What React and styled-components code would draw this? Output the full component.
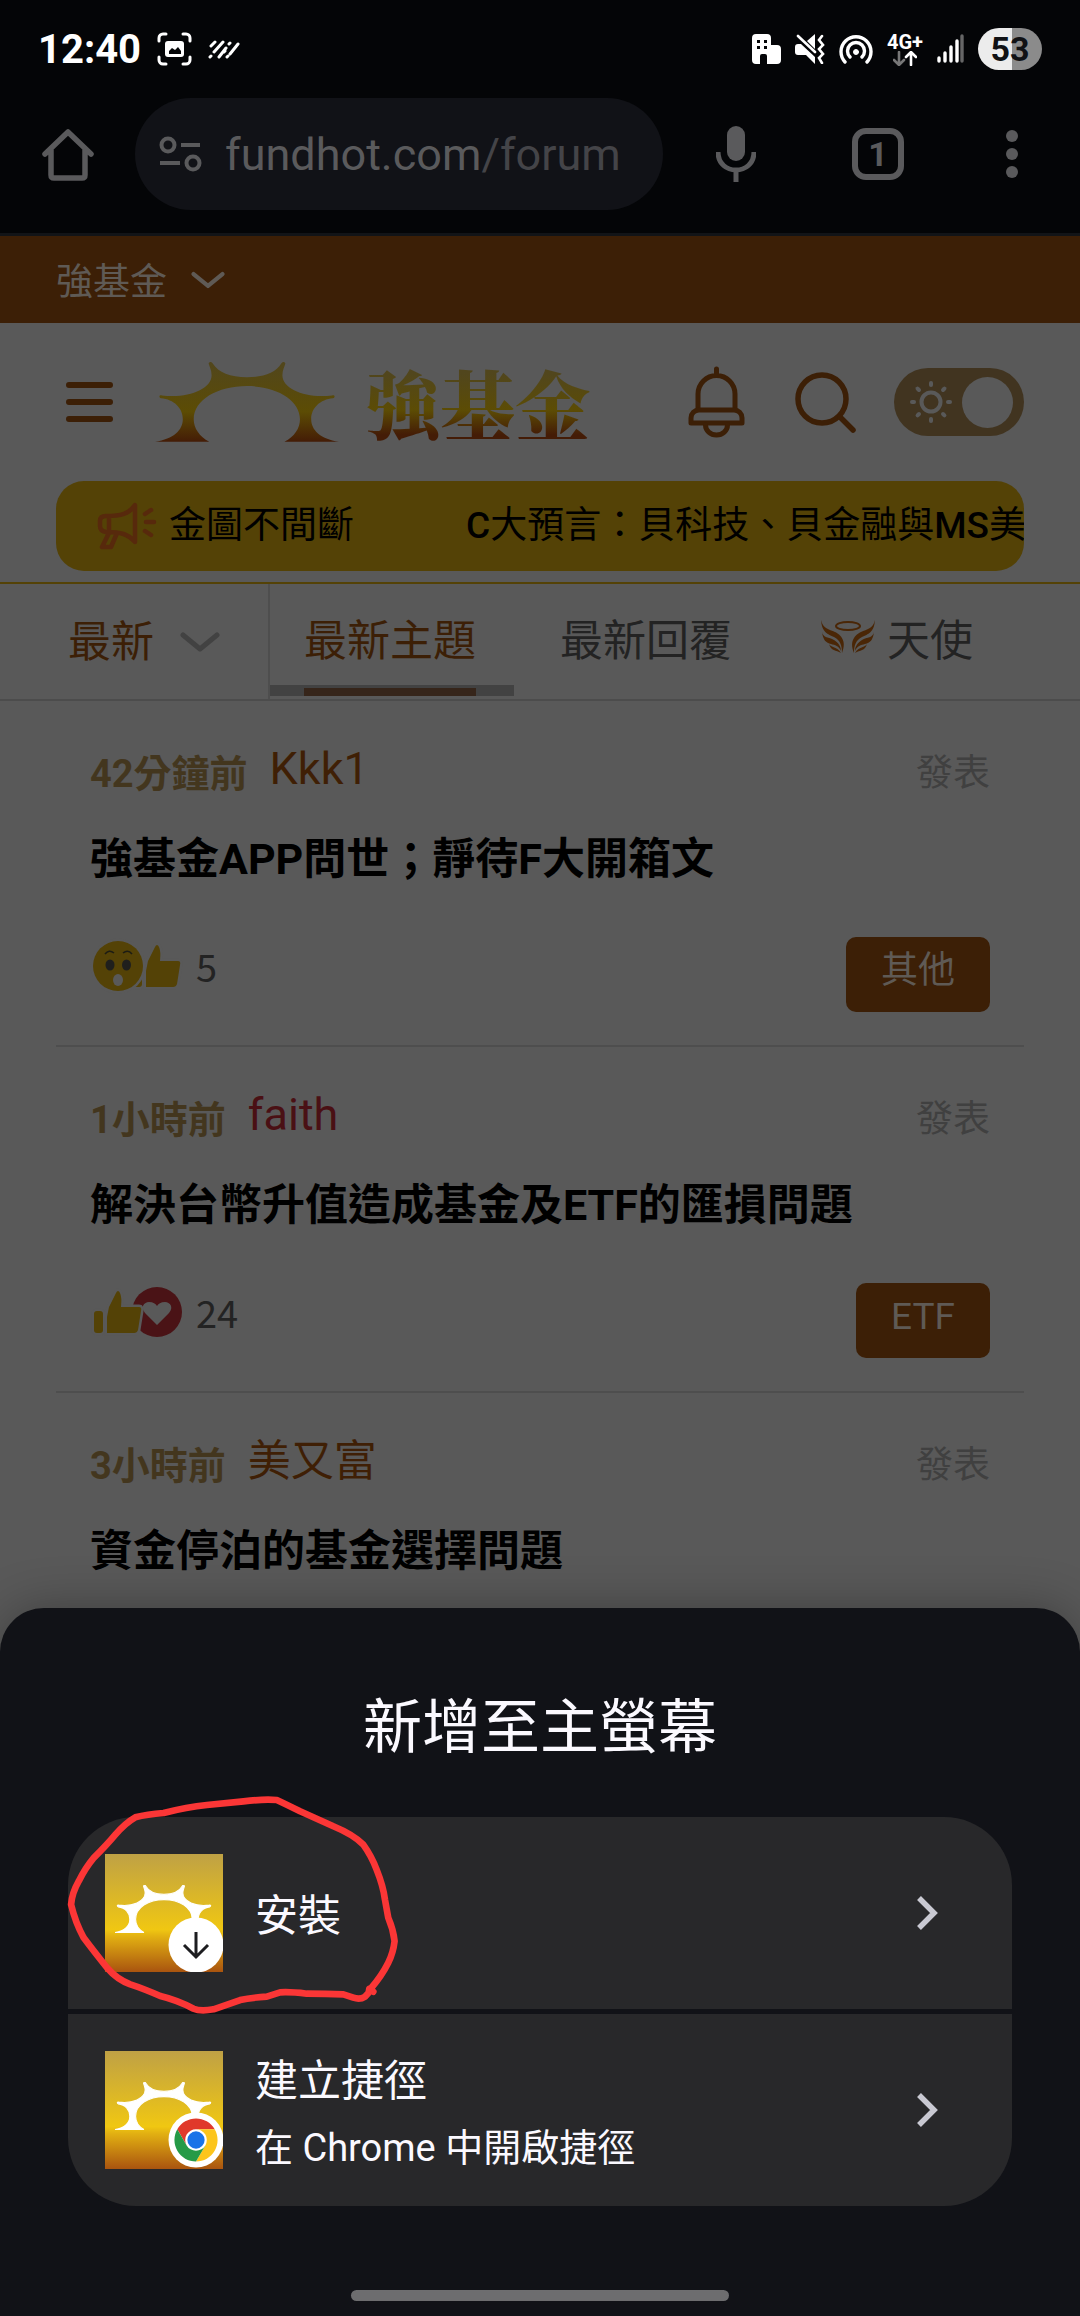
import React, { useState } from "react";
import styled, { createGlobalStyle } from "styled-components";

const posts = [
  {
    time: "42分鐘前",
    author: "Kkk1",
    latin: true,
    title: "強基金APP問世；靜待F大開箱文",
    reactions: ["wow", "like"],
    count: 5,
    tag: "其他"
  },
  {
    time: "1小時前",
    author: "faith",
    latin: true,
    red: true,
    title: "解決台幣升值造成基金及ETF的匯損問題",
    reactions: ["like", "love"],
    count: 24,
    tag: "ETF"
  },
  { time: "3小時前", author: "美又富", title: "資金停泊的基金選擇問題" }
];

const SUN_PATH =
  "M43 306C100 298 127 270 127 238C127 205 100 178 61 175C53 171 56 164 64 166C140 176 214 148 214 105C214 90 207 78 205 70C207 64 213 64 217 69C235 98 270 111 321 111C372 111 407 98 425 69C429 64 435 64 437 70C435 78 428 90 428 105C428 148 502 176 578 166C586 164 589 171 581 175C542 178 515 205 515 238C515 270 542 298 599 306H434C465 290 481 265 481 238C481 180 410 138 321 138C232 138 160 180 160 238C160 265 177 290 207 306Z";

const StatusIcons = () => (
  <>
    <svg width="29" height="30" viewBox="0 0 29 30" fill="#fff">
      <path
        fillRule="evenodd"
        d="M4 0H15a4 4 0 0 1 4 4V11H25a4 4 0 0 1 4 4V26a4 4 0 0 1-4 4H15V22a2 2 0 0 0-2-2H10a2 2 0 0 0-2 2V30H4a4 4 0 0 1-4-4V4a4 4 0 0 1 4-4ZM5 6V9H8V6ZM12 6V9H15V6ZM5 12V15H8V12ZM12 12V15H15V12Z"
      />
    </svg>
    <svg width="30" height="30" viewBox="0 0 30 30" fill="#fff">
      <path d="M3 10H6L20 23V30L11 21H3a3 3 0 0 1-3-3V13a3 3 0 0 1 3-3ZM12 7L20 0V15Z" />
      <path
        d="M3 2L20 18M27 2L24 6L28 11L24 15L28 20L24 24L27 29"
        fill="none"
        stroke="#fff"
        strokeWidth="2.6"
        strokeLinecap="round"
      />
    </svg>
    <svg width="34" height="30" viewBox="0 0 34 30" fill="none" stroke="#fff" strokeWidth="3.4" strokeLinecap="round">
      <path d="M6 28A15 15 0 1 1 28 28M11 23A8.500 8.500 0 1 1 23 23" />
      <circle cx="17" cy="18" r="2.500" fill="#fff" strokeWidth="1" />
    </svg>
    <Network>
      <span>4G+</span>
      <svg width="24" height="15" viewBox="0 0 24 15" fill="none" strokeWidth="2.6" strokeLinecap="round">
        <path d="M6 1V13M1 9L6 14L11 9" stroke="#777" />
        <path d="M18 14V2M13 6L18 1L23 6" stroke="#fff" />
      </svg>
    </Network>
    <svg width="27" height="30" viewBox="0 0 27 30" strokeWidth="3.4" strokeLinecap="round" stroke="#fff">
      <path d="M2 24V27M8 19V27M14 13V27M20 7V27" />
      <path d="M25 2V27" stroke="#666" />
    </svg>
  </>
);

const Chevron = ({ color, width, height }) => (
  <svg width={width} height={height} viewBox="0 0 40 20" fill="none">
    <path d="M3 3L20 17L37 3" stroke={color} strokeWidth="5" strokeLinecap="round" strokeLinejoin="round" />
  </svg>
);

const Reaction = ({ kind }) => {
  if (kind === "wow") {
    return (
      <svg width="50" height="50" viewBox="0 0 50 50">
        <circle cx="25" cy="25" r="25" fill="#544206" stroke="#595959" strokeWidth="5" paintOrder="stroke" />
        <path d="M12 13Q16 8 21 12M30 12Q35 8 39 13" fill="none" stroke="#1c1c14" strokeWidth="1.600" />
        <ellipse cx="17" cy="24" rx="4.500" ry="5.500" fill="#1f1f1d" />
        <ellipse cx="33.500" cy="24" rx="4.500" ry="5.500" fill="#1f1f1d" />
        <ellipse cx="25" cy="39" rx="5" ry="6" fill="#595959" />
      </svg>
    );
  }
  if (kind === "love") {
    return (
      <svg width="50" height="50" viewBox="0 0 50 50">
        <circle cx="25" cy="25" r="25" fill="#4a1316" />
        <path
          d="M25 38L13 26C8 20 12 15 17 15C21 15 24 17 25 19C26 17 29 15 33 15C38 15 42 20 37 26Z"
          fill="#595959"
        />
      </svg>
    );
  }
  return (
    <svg width="50" height="50" viewBox="0 0 50 50" fill="#544206" stroke="#595959" strokeWidth="5" paintOrder="stroke">
      <rect x="1" y="24" width="9" height="22" rx="3" />
      <path d="M14 46V30L16 20L23 6Q25 2 27 6Q29 10 28 20H46Q49 20 48 24L45 43Q44 46 41 46Z" />
    </svg>
  );
};

const AngelIcon = () => (
  <svg width="59" height="34" viewBox="-5 0 59 34" fill="#4a2606">
    <ellipse cx="27" cy="6" rx="12" ry="4" fill="none" stroke="#4a2606" strokeWidth="2" />
    <g id="wing">
      <path d="M0 0C2 9 8 9 14 12C20 15 26 21 21 33C21 25 19 20 13 17C7 14 1 13 0 0Z" />
      <path d="M1 12C2 18 8 17 13 20C18 23 20 27 20 31C18 26 14 25 10 24C5 23 2 20 1 12Z" />
      <path d="M8 24C10 28 16 26 20 33C15 30 10 31 8 24Z" />
    </g>
    <use href="#wing" transform="translate(54 0) scale(-1 1)" />
  </svg>
);

const AppIcon = ({ badge }) => (
  <svg width="118" height="118" viewBox="0 0 118 118">
    <defs>
      <linearGradient id="gold" x1="0" y1="0" x2="0" y2="1">
        <stop offset="0" stopColor="#bfa145" />
        <stop offset="0.640" stopColor="#f0c712" />
        <stop offset="0.700" stopColor="#e2b012" />
        <stop offset="1" stopColor="#a9540f" />
      </linearGradient>
    </defs>
    <rect width="118" height="118" fill="url(#gold)" />
    <svg x="10" y="31" width="98" height="48" viewBox="43 64 556 244" preserveAspectRatio="none">
      <path d={SUN_PATH} fill="#fff" stroke="#fff" strokeWidth="6" />
    </svg>
    {badge === "chrome" ? (
      <g transform="translate(91 89)">
        <circle r="27.500" fill="#fff" />
        <g transform="scale(1.080)">
          <path d="M0-10H17.300A20 20 0 0 0-17.300-10L-8.660 5A10 10 0 0 1 0-10Z" fill="#e0392b" />
          <path d="M0-10H17.300A20 20 0 0 0-17.300-10L-8.660 5A10 10 0 0 1 0-10Z" fill="#fcc51c" transform="rotate(120)" />
          <path d="M0-10H17.300A20 20 0 0 0-17.300-10L-8.660 5A10 10 0 0 1 0-10Z" fill="#259a47" transform="rotate(240)" />
          <circle r="8" fill="#1a73e8" />
        </g>
      </g>
    ) : (
      <g transform="translate(91 91)">
        <circle r="27.500" fill="#fff" />
        <path d="M0-13V11M-12 0L0 12L12 0" fill="none" stroke="#1d1d20" strokeWidth="3" />
      </g>
    )}
  </svg>
);

const Arrow = () => (
  <svg width="22" height="34" viewBox="0 0 22 34" fill="none">
    <path d="M2 2L17 17L2 32" stroke="#c9c9d2" strokeWidth="5.500" />
  </svg>
);

const Post = ({ post }) => (
  <PostItem>
    <Meta>
      <Time>{post.time}</Time>
      <Author href="#" $red={post.red} $latin={post.latin}>
        {post.author}
      </Author>
      <Action>發表</Action>
    </Meta>
    <PostTitle>{post.title}</PostTitle>
    {post.tag && (
      <PostFooter>
        <Reactions>
          {post.reactions.map(kind => (
            <Reaction key={kind} kind={kind} />
          ))}
          <Count>{post.count}</Count>
        </Reactions>
        <Tag href="#">{post.tag}</Tag>
      </PostFooter>
    )}
  </PostItem>
);

export default function App() {
  const [light, setLight] = useState(true);
  return (
    <Screen>
      <GlobalStyle />
      <StatusBar>
        <Clock>12:40</Clock>
        <svg width="35" height="34" viewBox="0 0 35 34" fill="none" stroke="#fff" strokeWidth="3" strokeLinecap="round">
          <path d="M2 9V6a4 4 0 0 1 4-4H9M26 2H29a4 4 0 0 1 4 4V9M33 25V28a4 4 0 0 1-4 4H26M9 32H6a4 4 0 0 1-4-4V25" />
          <rect x="8" y="9" width="19" height="16" rx="3" fill="#fff" stroke="none" />
          <path d="M12 22V19L15 16L18 18L21 15L24 19V22Z" fill="#040507" stroke="none" />
        </svg>
        <svg width="32" height="19" viewBox="0 0 32 19" stroke="#fff" strokeWidth="3" strokeLinecap="round">
          <path d="M3 6L7 2M2 17L3 16M6 12L15 2M11 17L18 8M21 4L22 3M19 17L20 16M16 12L17 11M22 14L30 4" />
        </svg>
        <StatusRight>
          <StatusIcons />
          <Battery>53</Battery>
        </StatusRight>
      </StatusBar>

      <BrowserBar>
        <IconButton aria-label="home">
          <svg width="52" height="53" viewBox="0 0 52 53" fill="none" stroke="#5a5a5c" strokeWidth="5.500" strokeLinejoin="round" strokeLinecap="round">
            <path d="M3 26L26 4L49 26M9 22V47Q9 50 12 50H40Q43 50 43 47V22" />
          </svg>
        </IconButton>
        <Omnibox>
          <svg width="43" height="37" viewBox="0 0 43 37" fill="none" stroke="#5a5a5c" strokeWidth="4">
            <circle cx="9" cy="9" r="6.500" />
            <path d="M22 9H41M1 27H21" />
            <circle cx="34" cy="27" r="6.500" />
          </svg>
          <Url>
            fundhot.com<span>/forum</span>
          </Url>
        </Omnibox>
        <BrowserActions>
          <IconButton aria-label="voice">
            <svg width="40" height="56" viewBox="0 0 40 56">
              <rect x="11" y="0" width="18" height="35" rx="9" fill="#5a5a5c" />
              <path d="M2 26C2 50 38 50 38 26M20 44V56" fill="none" stroke="#5a5a5c" strokeWidth="5" />
            </svg>
          </IconButton>
          <TabCount>1</TabCount>
          <IconButton aria-label="menu">
            <svg width="24" height="48" viewBox="-6 0 24 48" fill="#5a5a5c">
              <circle cx="6" cy="6" r="6" />
              <circle cx="6" cy="24" r="6" />
              <circle cx="6" cy="42" r="6" />
            </svg>
          </IconButton>
        </BrowserActions>
      </BrowserBar>

      <TopBar>
        <SiteSelect aria-label="site">
          <option>強基金</option>
        </SiteSelect>
        <Chevron color="#5f5a55" width={34} height={18} />
      </TopBar>

      <Header>
        <IconButton aria-label="navigation">
          <svg width="47" height="40" viewBox="0 0 47 40" stroke="#3c1f06" strokeWidth="6" strokeLinecap="round">
            <path d="M3 3H44M3 20H44M3 37H44" />
          </svg>
        </IconButton>
        <Logo href="#">
          <svg width="184" height="82" viewBox="43 64 556 244">
            <defs>
              <linearGradient id="dimGold" x1="0" y1="0" x2="0" y2="1">
                <stop offset="0" stopColor="#51461d" />
                <stop offset="0.620" stopColor="#5c4c04" />
                <stop offset="1" stopColor="#441c06" />
              </linearGradient>
            </defs>
            <path d={SUN_PATH} fill="url(#dimGold)" />
          </svg>
          <LogoText>強基金</LogoText>
        </Logo>
        <HeaderActions>
          <IconButton aria-label="notifications">
            <svg width="57" height="72" viewBox="0 0 57 72" fill="none" stroke="#3c1f06" strokeWidth="5" strokeLinejoin="round" strokeLinecap="round">
              <path d="M28.500 3V9M10 42V28a18.500 18.500 0 0 1 37 0V42" />
              <path d="M3 57V52a8 8 0 0 1 8-8H46a8 8 0 0 1 8 8V57Z" />
              <path d="M17.500 59a11 10 0 0 0 22 0" />
            </svg>
          </IconButton>
          <IconButton aria-label="search">
            <svg width="61" height="61" viewBox="0 0 61 61" fill="none" stroke="#3c1f06" strokeWidth="5.500" strokeLinecap="round">
              <circle cx="27" cy="27" r="24" />
              <path d="M45 45L58 58" />
            </svg>
          </IconButton>
          <Toggle>
            <input
              type="checkbox"
              aria-label="light mode"
              checked={light}
              onChange={() => setLight(!light)}
            />
            <svg width="44" height="44" viewBox="-22 -22 44 44" fill="none" stroke="#595959" strokeWidth="4" strokeLinecap="round">
              <circle r="9.500" />
              {[0, 45, 90, 135, 180, 225, 270, 315].map(deg => (
                <path key={deg} d="M0-17V-19" transform={`rotate(${deg})`} />
              ))}
            </svg>
            <Knob />
          </Toggle>
        </HeaderActions>
      </Header>

      <Ticker>
        <svg width="60" height="48" viewBox="0 0 60 48" fill="none" stroke="#57290c" strokeWidth="4.500" strokeLinejoin="round" strokeLinecap="round">
          <path d="M38 3V40C31 32 24 30 9 30Q3 29 3 24V19Q3 14 9 14C24 14 32 12 38 3ZM12 14V30M12 31L5 45H14L20 31" />
          <path d="M48 12L54 8M49 20H57M48 29L54 33" />
        </svg>
        <TickerText>金圖不間斷</TickerText>
        <TickerText $next>
          <b>C</b>大預言：貝科技、貝金融與<b>MS</b>美
        </TickerText>
      </Ticker>

      <Tabs>
        <SortBox>
          <SortSelect aria-label="sort">
            <option>最新</option>
          </SortSelect>
          <Chevron color="#424242" width={40} height={20} />
        </SortBox>
        <TabList>
          <Tab $active>
            <TabLabel>最新主題</TabLabel>
            <Underline />
          </Tab>
          <Tab>
            <TabLabel>最新回覆</TabLabel>
          </Tab>
          <Tab>
            <TabLabel>
              <AngelIcon />
              天使
            </TabLabel>
          </Tab>
        </TabList>
      </Tabs>

      <PostList>
        {posts.map(post => (
          <Post key={post.title} post={post} />
        ))}
      </PostList>

      <Sheet role="dialog" aria-labelledby="sheet-title">
        <SheetTitle id="sheet-title">新增至主螢幕</SheetTitle>
        <Options>
          <Option>
            <AppIcon badge="download" />
            <OptionText>
              <OptionName>安裝</OptionName>
            </OptionText>
            <Arrow />
          </Option>
          <Option>
            <AppIcon badge="chrome" />
            <OptionText>
              <OptionName>建立捷徑</OptionName>
              <OptionHint>在 Chrome 中開啟捷徑</OptionHint>
            </OptionText>
            <Arrow />
          </Option>
          <Scribble viewBox="195 40 1010 670">
            <path d="M1120 637L1108 628L1106 640L1095 652Q1080 662 1060 655L1030 645Q980 643 920 643Q870 637 840 639L800 652Q750 655 720 662L640 690Q600 697 580 688Q530 662 480 650Q430 628 390 615Q350 600 320 565Q280 515 250 475Q225 430 212 375Q215 340 235 305Q255 265 280 235Q320 195 345 165Q375 130 405 113Q440 104 490 100Q560 82 620 76Q680 70 730 65Q790 58 830 61Q860 75 900 95L1000 140Q1060 165 1090 195Q1115 230 1130 270Q1150 320 1155 360L1165 415Q1180 450 1184 485Q1180 520 1165 550Q1145 590 1112 628" />
          </Scribble>
        </Options>
        <HomeIndicator />
      </Sheet>
    </Screen>
  );
}

const GlobalStyle = createGlobalStyle`
  * {
    box-sizing: border-box;
  }
  body {
    margin: 0;
    background: #595959;
    font-family: Roboto, "Noto Sans CJK TC", sans-serif;
  }
  button, select {
    margin: 0;
    padding: 0;
    border: 0;
    background: none;
    color: inherit;
    font: inherit;
    appearance: none;
  }
  a {
    color: inherit;
    text-decoration: none;
  }
  svg {
    display: block;
    flex: none;
  }
`;
const Screen = styled.div`
  position: relative;
  min-height: 100vh;
  overflow: hidden;
  background: #595959;
`;
const StatusBar = styled.div`
  display: flex;
  align-items: center;
  height: 98px;
  padding: 0 38px;
  gap: 16px;
  background: #040507;
`;
const Clock = styled.span`
  color: #fff;
  font-size: 40px;
  font-weight: 700;
`;
const StatusRight = styled.div`
  display: flex;
  align-items: center;
  gap: 14px;
  margin-left: auto;
`;
const Network = styled.span`
  display: flex;
  flex-direction: column;
  align-items: center;
  color: #fff;
  font-size: 20px;
  font-weight: 700;
  line-height: 18px;
`;
const Battery = styled.span`
  width: 64px;
  border-radius: 21px;
  background: linear-gradient(90deg, #ececec 53%, #8b8b8b 53%);
  color: #101114;
  font-size: 34px;
  font-weight: 700;
  line-height: 42px;
  text-align: center;
`;
const IconButton = styled.button`
  display: flex;
`;
const BrowserBar = styled.div`
  display: flex;
  align-items: center;
  padding: 0 56px 23px 42px;
  background: #040507;
  border-bottom: 3px solid #121417;
`;
const Omnibox = styled.button`
  display: flex;
  flex: 1;
  align-items: center;
  height: 112px;
  margin-left: 41px;
  padding: 0 24px;
  gap: 23px;
  border-radius: 56px;
  background: #111217;
`;
const Url = styled.span`
  color: #5a5a5c;
  font-size: 45px;
  span {
    color: #444448;
  }
`;
const BrowserActions = styled.div`
  display: flex;
  align-items: center;
  gap: 96px;
  margin-left: 53px;
`;
const TabCount = styled.button`
  width: 52px;
  height: 52px;
  border: 6px solid #5a5a5c;
  border-radius: 14px;
  color: #5a5a5c;
  font-size: 34px;
  font-weight: 700;
  line-height: 40px;
`;
const TopBar = styled.div`
  display: flex;
  align-items: center;
  height: 87px;
  padding: 0 56px;
  gap: 24px;
  background: #3c1f06;
`;
const SiteSelect = styled.select`
  padding-top: 5px;
  color: #5f5a55;
  font-size: 37px;
`;
const Header = styled.header`
  display: flex;
  align-items: center;
  height: 158px;
  padding: 0 56px 0 66px;
`;
const Logo = styled.a`
  display: flex;
  align-items: center;
  gap: 26px;
  margin-left: 42px;
`;
const LogoText = styled.span`
  background: linear-gradient(#51461d 15%, #5c4c04 60%, #441c06 90%);
  background-clip: text;
  color: transparent;
  font-family: "Noto Serif CJK TC", "Noto Sans CJK TC", serif;
  font-size: 75px;
  font-weight: 900;
  line-height: 82px;
`;
const HeaderActions = styled.div`
  display: flex;
  align-items: center;
  gap: 38px;
  margin-left: auto;
  button:first-child {
    margin-right: 12px;
  }
`;
const Toggle = styled.label`
  display: flex;
  align-items: center;
  justify-content: space-between;
  width: 130px;
  height: 68px;
  padding: 0 11px 0 15px;
  border-radius: 34px;
  background: #413420;
  input {
    position: absolute;
    opacity: 0;
  }
`;
const Knob = styled.span`
  width: 51px;
  height: 51px;
  border-radius: 50%;
  background: #595959;
`;
const Ticker = styled.div`
  display: flex;
  align-items: center;
  height: 90px;
  margin: 0 56px 11px;
  padding-left: 41px;
  border-radius: 28px;
  background: #544206;
  overflow: hidden;
`;
const TickerText = styled.span`
  flex: none;
  margin-left: ${props => (props.$next ? 112 : 12)}px;
  padding-bottom: 8px;
  color: #000;
  font-size: 37px;
  white-space: nowrap;
  b {
    font-weight: 500;
  }
`;
const Tabs = styled.nav`
  display: flex;
  height: 119px;
  border-top: 2px solid #544206;
  border-bottom: 2px solid #4c4c4c;
  font-size: 43px;
`;
const SortBox = styled.div`
  display: flex;
  align-items: center;
  padding: 0 48px 0 68px;
  gap: 26px;
  border-right: 2px solid #4e4e4e;
`;
const SortSelect = styled.select`
  color: #3c1f06;
`;
const TabList = styled.div`
  display: flex;
  gap: 12px;
`;
const Tab = styled.button`
  display: flex;
  flex-direction: column;
  height: 112px;
  color: ${props => (props.$active ? "#3c1f06" : "#232323")};
`;
const TabLabel = styled.span`
  display: flex;
  flex: none;
  align-items: center;
  height: 101px;
  padding: 4px 38px 0 34px;
  gap: 12px;
`;
const Underline = styled.span`
  align-self: stretch;
  height: 11px;
  padding: 3px 38px 0 34px;
  background: #424242;
  &::after {
    content: "";
    display: block;
    height: 8px;
    background: #36251a;
  }
`;
const PostList = styled.ul`
  margin: 0 56px;
  padding: 0;
  list-style: none;
`;
const PostItem = styled.li`
  padding: 43px 34px 33px;
  border-bottom: 2px solid #4e4e4e;
`;
const Meta = styled.div`
  display: flex;
  align-items: flex-end;
  gap: 22px;
  font-size: 38px;
  line-height: 40px;
`;
const Time = styled.span`
  color: #43361e;
  font-weight: 700;
`;
const Author = styled.a`
  color: ${props => (props.$red ? "#4a1014" : "#3f1f05")};
  font-size: ${props => (props.$latin ? 45 : 43)}px;
  line-height: 50px;
`;
const Action = styled.span`
  margin-left: auto;
  color: #404040;
  font-size: 37px;
`;
const PostTitle = styled.h2`
  margin: 35px 0 0;
  color: #000;
  font-size: 43px;
  font-weight: 700;
  line-height: 60px;
`;
const PostFooter = styled.div`
  display: flex;
  align-items: flex-start;
  justify-content: space-between;
  margin-top: 48px;
`;
const Reactions = styled.div`
  display: flex;
  align-items: center;
  height: 57px;
  padding-left: 3px;
  svg {
    position: relative;
    overflow: visible;
  }
  svg:first-child {
    z-index: 1;
  }
  svg + svg {
    margin-left: -11px;
  }
`;
const Count = styled.span`
  margin-left: 14px;
  color: #232323;
  font-family: "Noto Sans CJK TC", sans-serif;
  font-size: 38px;
  line-height: 50px;
`;
const Tag = styled.a`
  padding: 9px 35px 16px;
  border-radius: 10px;
  background: #3c1f06;
  color: #5f5a55;
  font-size: 37px;
  line-height: 50px;
`;
const Sheet = styled.section`
  position: absolute;
  right: 0;
  bottom: 0;
  left: 0;
  padding: 80px 68px 15px;
  border-radius: 44px 44px 0 0;
  background: #111217;
  box-shadow: 0 0 50px rgba(0, 0, 0, 0.3);
  color: #fbf9ff;
`;
const SheetTitle = styled.h1`
  margin: 0 0 49px;
  font-size: 59px;
  font-weight: 400;
  line-height: 80px;
  text-align: center;
`;
const Options = styled.div`
  position: relative;
  display: grid;
  gap: 5px;
`;
const Option = styled.button`
  display: flex;
  align-items: center;
  height: 192px;
  padding: 0 73px 0 37px;
  gap: 32px;
  background: #28282a;
  text-align: left;
  &:first-child {
    border-radius: 68px 68px 0 0;
  }
  &:nth-child(2) {
    border-radius: 0 0 68px 68px;
  }
`;
const OptionText = styled.span`
  display: flex;
  flex: 1;
  flex-direction: column;
  padding-top: 6px;
`;
const OptionName = styled.span`
  font-size: 43px;
  line-height: 70px;
`;
const OptionHint = styled.span`
  font-size: 38px;
  line-height: 64px;
`;
/* hand-drawn ring round the install option */
const Scribble = styled.svg`
  position: absolute;
  top: -24px;
  left: -3px;
  width: 337px;
  height: 223px;
  pointer-events: none;
  path {
    fill: none;
    stroke: #fb3636;
    stroke-width: 20px;
    stroke-linecap: round;
    stroke-linejoin: round;
  }
`;
const HomeIndicator = styled.div`
  width: 40%;
  max-width: 378px;
  height: 11px;
  margin: 84px auto 0;
  border-radius: 6px;
  background: #6d6d6f;
`;
